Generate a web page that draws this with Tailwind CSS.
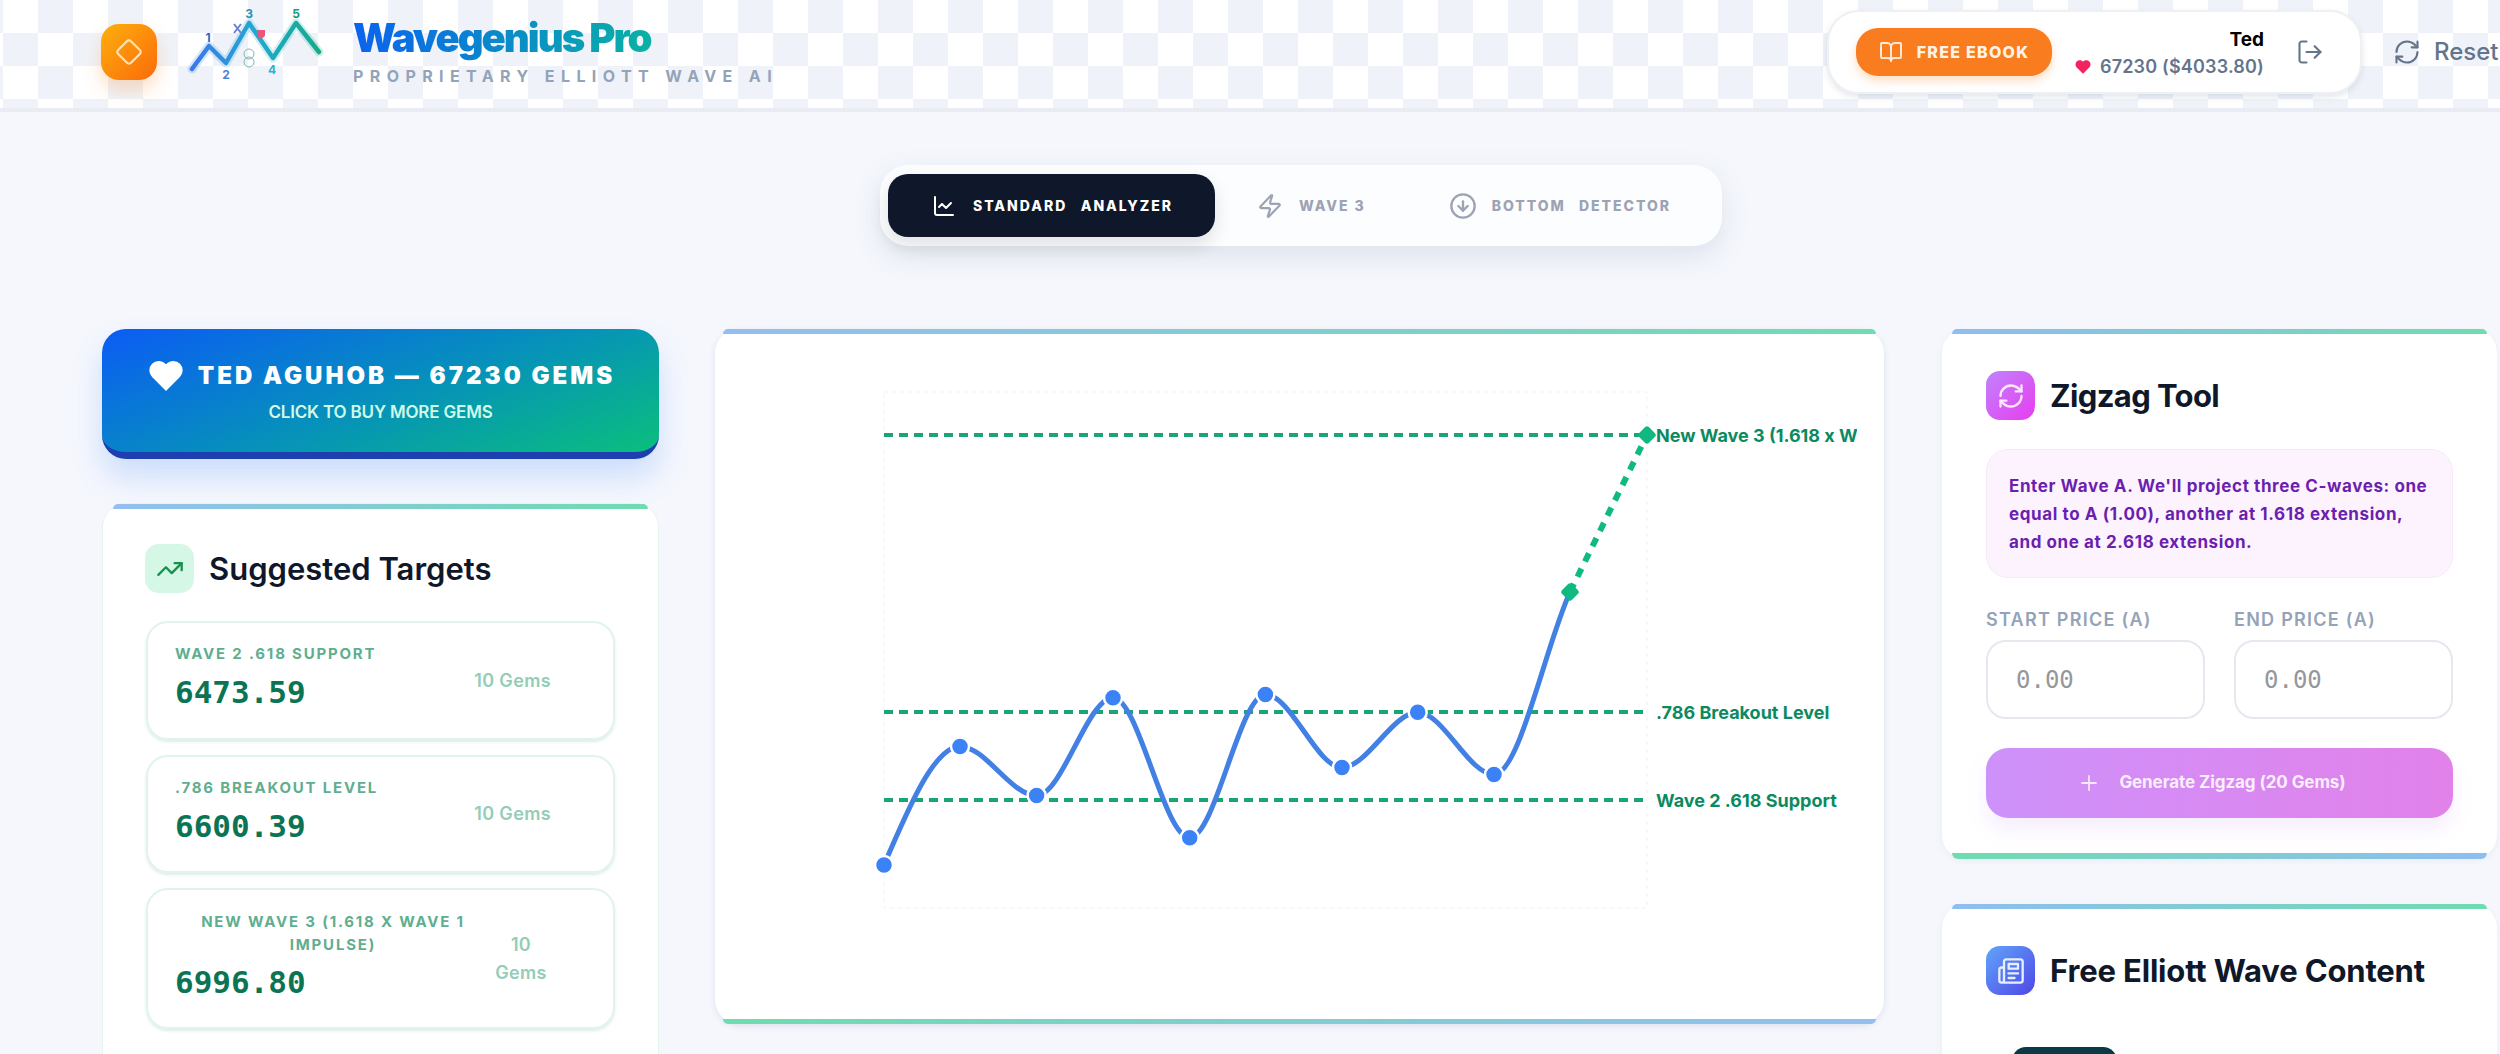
<!DOCTYPE html>
<html lang="en">
<head>
<meta charset="utf-8">
<title>Wavegenius Pro</title>
<script src="https://cdn.jsdelivr.net/npm/@tailwindcss/browser@4"></script>
</head>
<body class="font-['Inter',sans-serif]">
<div class="w-[2500px] h-[1054px] overflow-hidden bg-[#f5f7fd] flex flex-col">

  <header class="h-[112px] shrink-0 flex items-center pl-[101px] pb-[4px] border-b-4 border-[#e9edf3] bg-white bg-[conic-gradient(#eff3f9_25%,#ffffff_0_50%,#eff3f9_0_75%,#ffffff_0)] bg-[length:70px_66px] bg-[position:3px_0]">
    <div class="w-14 h-14 rounded-[18px] bg-[linear-gradient(135deg,#fdb00d,#fb6a0a)] shadow-[0_10px_18px_rgba(251,146,60,0.3)] flex items-center justify-center shrink-0">
      <svg class="w-7 h-7" viewBox="0 0 24 24" fill="none" stroke="#ffe3b8" stroke-width="1.8" stroke-linecap="round" stroke-linejoin="round"><path d="M2.7 10.3a2.41 2.41 0 0 0 0 3.41l7.59 7.59a2.41 2.41 0 0 0 3.41 0l7.59-7.59a2.41 2.41 0 0 0 0-3.41l-7.59-7.59a2.41 2.41 0 0 0-3.41 0Z"/></svg>
    </div>
    <svg class="ml-[28px] mb-[24px] shrink-0" width="140" height="80" viewBox="185 0 140 80" font-family="Inter, sans-serif" font-weight="700" font-size="12" text-anchor="middle">
      <defs>
        <linearGradient id="lg" gradientUnits="userSpaceOnUse" x1="192" y1="0" x2="319" y2="0"><stop offset="0" stop-color="#3b78e8"/><stop offset=".5" stop-color="#22a9d0"/><stop offset="1" stop-color="#14ab8a"/></linearGradient>
      </defs>
      <polyline points="192,69 209,46 226,63 249,23 273,58 296,23 319,52" fill="none" stroke="url(#lg)" stroke-width="9" stroke-linecap="round" stroke-linejoin="round" opacity=".2"/>
      <polyline points="192,69 209,46 226,63 249,23 273,58 296,23 319,52" fill="none" stroke="url(#lg)" stroke-width="4.5" stroke-linecap="round" stroke-linejoin="round"/>
      <text x="208" y="42" fill="#2f66c4">1</text>
      <text x="226" y="79" fill="#4d82d6">2</text>
      <text x="249" y="18" fill="#1f94b8">3</text>
      <text x="272" y="74" fill="#2bb3d6">4</text>
      <text x="296" y="18" fill="#149a78">5</text>
      <path d="M234 24l7 9M241 24l-7 9" stroke="#6f7fd0" stroke-width="2" fill="none"/>
      <path d="M257 30h8v6l-4 3-4-3z" fill="#e8557f"/>
      <circle cx="249" cy="54" r="5" fill="none" stroke="#7fb7b8" stroke-width="1"/>
      <circle cx="249" cy="62" r="5" fill="none" stroke="#7fb7b8" stroke-width="1"/>
    </svg>
    <div class="ml-[28px] mb-[4px] shrink-0 flex flex-col">
      <div class="text-[40px] leading-[46px] font-black tracking-[-0.05em] bg-[linear-gradient(90deg,#0b63ee,#0ab6a0_75%,#10b981)] bg-clip-text text-transparent">Wavegenius Pro</div>
      <div class="mt-[5px] text-[16px] leading-5 font-bold tracking-[0.4em] text-[#94a3b8] whitespace-nowrap">PROPRIETARY ELLIOTT WAVE AI</div>
    </div>
    <div class="ml-auto flex items-center gap-[31px] shrink-0 whitespace-nowrap">
      <div class="w-[535px] h-[84px] bg-white rounded-[32px] border-2 border-[#eef0f4] shadow-[0_3px_6px_rgba(100,116,139,0.18)] flex items-center pl-[27px]">
        <div class="w-[196px] h-[48px] rounded-[22px] bg-[#f97c1e] shadow-[0_5px_10px_rgba(251,146,60,0.3)] flex items-center justify-center gap-[14px] text-white">
          <svg class="w-[24px] h-[24px]" viewBox="0 0 24 24" fill="none" stroke="#ffe9d6" stroke-width="2" stroke-linecap="round" stroke-linejoin="round"><path d="M12 7v14"/><path d="M3 18a1 1 0 0 1-1-1V4a1 1 0 0 1 1-1h5a4 4 0 0 1 4 4 4 4 0 0 1 4-4h5a1 1 0 0 1 1 1v13a1 1 0 0 1-1 1h-6a3 3 0 0 0-3 3 3 3 0 0 0-3-3z"/></svg>
          <span class="text-[16px] font-extrabold tracking-[0.08em] text-[#fff3e6]">FREE EBOOK</span>
        </div>
        <div class="w-[212px] flex flex-col items-end">
          <div class="text-[19px] leading-[26px] font-bold text-black">Ted</div>
          <div class="flex items-center gap-[8px] mt-[3px]">
            <svg class="w-[18px] h-[18px]" viewBox="0 0 24 24" fill="#f4225e"><path d="M19 14c1.49-1.46 3-3.21 3-5.5A5.5 5.5 0 0 0 16.5 3c-1.76 0-3 .5-4.5 2-1.5-1.5-2.74-2-4.5-2A5.5 5.5 0 0 0 2 8.5c0 2.3 1.5 4.05 3 5.5l7 7Z"/></svg>
            <span class="text-[18px] leading-[22px] font-semibold tracking-[0.01em] text-[#64748b]">67230 ($4033.80)</span>
          </div>
        </div>
        <svg class="ml-[32px] w-[28px] h-[28px]" viewBox="0 0 24 24" fill="none" stroke="#64748b" stroke-width="1.8" stroke-linecap="round" stroke-linejoin="round"><path d="M9 21H5a2 2 0 0 1-2-2V5a2 2 0 0 1 2-2h4"/><polyline points="16 17 21 12 16 7"/><line x1="21" y1="12" x2="9" y2="12"/></svg>
      </div>
      <div class="flex items-center gap-[13px] text-[#64748b] w-[107px]">
        <svg class="w-[28px] h-[28px] shrink-0" viewBox="0 0 24 24" fill="none" stroke="#64748b" stroke-width="1.8" stroke-linecap="round" stroke-linejoin="round"><path d="M3 12a9 9 0 0 1 9-9 9.75 9.75 0 0 1 6.74 2.74L21 8"/><path d="M21 3v5h-5"/><path d="M21 12a9 9 0 0 1-9 9 9.75 9.75 0 0 1-6.74-2.74L3 16"/><path d="M8 16H3v5"/></svg>
        <span class="text-[24px] leading-8 font-medium">Reset</span>
      </div>
    </div>
  </header>

  <div class="flex justify-center pt-[53px] ml-[102px]">
    <nav class="w-[842px] h-[81px] bg-[#fcfdfe] rounded-[28px] shadow-[0_10px_28px_rgba(100,116,139,0.16)] flex items-center pl-[8px] text-[14px] font-extrabold tracking-[0.14em] whitespace-nowrap">
      <div class="w-[327px] h-[63px] rounded-[20px] bg-[#0f172a] text-white flex items-center pl-[44px] gap-[17px] shadow-[0_8px_18px_rgba(15,23,42,0.12)]">
        <svg class="w-[24px] h-[24px]" viewBox="0 0 24 24" fill="none" stroke="currentColor" stroke-width="2" stroke-linecap="round" stroke-linejoin="round"><path d="M3 3v16a2 2 0 0 0 2 2h16"/><path d="m19 9-5 5-4-4-3 3"/></svg>
        <span class="[word-spacing:0.6em]">STANDARD ANALYZER</span>
      </div>
      <div class="ml-[42px] flex items-center gap-[16px] text-[#9ca3b4]">
        <svg class="w-[26px] h-[26px]" viewBox="0 0 24 24" fill="none" stroke="currentColor" stroke-width="2" stroke-linecap="round" stroke-linejoin="round"><path d="M4 14a1 1 0 0 1-.78-1.63l9.9-10.2a.5.5 0 0 1 .86.46l-1.92 6.02A1 1 0 0 0 13 10h7a1 1 0 0 1 .78 1.63l-9.9 10.2a.5.5 0 0 1-.86-.46l1.92-6.02A1 1 0 0 0 11 14z"/></svg>
        <span>WAVE 3</span>
      </div>
      <div class="ml-[83px] flex items-center gap-[15px] text-[#9ca3b4]">
        <svg class="w-[28px] h-[28px]" viewBox="0 0 24 24" fill="none" stroke="currentColor" stroke-width="2" stroke-linecap="round" stroke-linejoin="round"><circle cx="12" cy="12" r="10"/><path d="M12 8v8"/><path d="m8 12 4 4 4-4"/></svg>
        <span class="[word-spacing:0.6em]">BOTTOM DETECTOR</span>
      </div>
    </nav>
  </div>

  <main class="mt-[83px] pl-[102px] grid grid-cols-[557px_1169px_557px] gap-x-[56px]">

    <section class="flex flex-col">
      <div class="h-[130px] pb-[3px] rounded-[24px] border-b-[7px] border-[#1e3fb0] bg-[linear-gradient(160deg,#0b5cf5,#0693b8_55%,#0abf7c)] shadow-[0_18px_30px_rgba(59,130,246,0.22)] flex flex-col items-center justify-center text-white">
        <div class="flex items-center gap-[12px]">
          <svg class="w-[40px] h-[40px]" viewBox="0 0 24 24" fill="#ffffff"><path d="M19 14c1.49-1.46 3-3.21 3-5.5A5.5 5.5 0 0 0 16.5 3c-1.76 0-3 .5-4.5 2-1.5-1.5-2.74-2-4.5-2A5.5 5.5 0 0 0 2 8.5c0 2.3 1.5 4.05 3 5.5l7 7Z"/></svg>
          <span class="text-[24px] leading-[30px] font-black tracking-[0.125em]">TED AGUHOB — 67230 GEMS</span>
        </div>
        <div class="mt-[6px] text-[17px] leading-5 font-semibold tracking-[-0.01em] text-[#d2fae8]">CLICK TO BUY MORE GEMS</div>
      </div>

      <div class="mt-[44px] h-[600px] bg-white rounded-[24px] border border-[#e3f5ee] flex flex-col">
        <div class="h-[5px] mx-[10px] rounded-t-[10px] bg-[linear-gradient(90deg,#93bff0,#6fdcb0)] shrink-0"></div>
        <div class="mt-[35px] ml-[42px] flex items-center gap-[15px]">
          <div class="w-[49px] h-[49px] rounded-[14px] bg-[#d5f7e6] flex items-center justify-center">
            <svg class="w-[28px] h-[28px]" viewBox="0 0 24 24" fill="none" stroke="#16924f" stroke-width="2" stroke-linecap="round" stroke-linejoin="round"><path d="M22 7 13.5 15.5 8.5 10.5 2 17"/><path d="M16 7h6v6"/></svg>
          </div>
          <h2 class="text-[31px] leading-9 font-semibold text-[#0f172a]">Suggested Targets</h2>
        </div>
        <div class="mt-[28px] mx-[43px] flex flex-col gap-[15px]">
          <div class="h-[119px] rounded-[22px] border-2 border-[#e0f3ec] shadow-[0_2px_3px_rgba(16,120,90,0.14)] flex items-center pl-[27px] pr-[62px]">
            <div class="flex-1 self-start pt-[19px]">
              <div class="text-[15px] leading-[23px] font-bold tracking-[0.12em] text-[#5fae90]">WAVE 2 .618 SUPPORT</div>
              <div class="mt-[9px] font-['DejaVu_Sans_Mono',monospace] text-[31px] leading-[36px] font-bold text-[#0b7454]">6473.59</div>
            </div>
            <div class="text-[18px] leading-7 font-semibold tracking-[0.02em] text-[#93cdb8]">10 Gems</div>
          </div>
          <div class="h-[118px] rounded-[22px] border-2 border-[#e0f3ec] shadow-[0_2px_3px_rgba(16,120,90,0.14)] flex items-center pl-[27px] pr-[62px]">
            <div class="flex-1 self-start pt-[19px]">
              <div class="text-[15px] leading-[23px] font-bold tracking-[0.12em] text-[#5fae90]">.786 BREAKOUT LEVEL</div>
              <div class="mt-[9px] font-['DejaVu_Sans_Mono',monospace] text-[31px] leading-[36px] font-bold text-[#0b7454]">6600.39</div>
            </div>
            <div class="text-[18px] leading-7 font-semibold tracking-[0.02em] text-[#93cdb8]">10 Gems</div>
          </div>
          <div class="h-[141px] rounded-[22px] border-2 border-[#e0f3ec] shadow-[0_2px_3px_rgba(16,120,90,0.14)] flex items-center pl-[27px] pr-[62px]">
            <div class="flex-1 self-start pt-[20px]">
              <div class="text-[15px] leading-[23px] font-bold tracking-[0.12em] text-[#5fae90] text-center">NEW WAVE 3 (1.618 X WAVE 1<br>IMPULSE)</div>
              <div class="mt-[8px] font-['DejaVu_Sans_Mono',monospace] text-[31px] leading-[36px] font-bold text-[#0b7454]">6996.80</div>
            </div>
            <div class="w-[60px] text-center text-[18px] leading-7 font-semibold tracking-[0.02em] text-[#93cdb8]">10 Gems</div>
          </div>
        </div>
      </div>
    </section>

    <section class="h-[695px] bg-white rounded-[24px] shadow-[0_2px_6px_rgba(100,116,139,0.16)] flex flex-col">
      <div class="h-[5px] mx-[8px] rounded-t-[10px] bg-[linear-gradient(90deg,#93bff0,#6fdcb0)] shrink-0"></div>
      <svg class="flex-1 w-[1142px]" viewBox="715 336 1142 683" width="1142" height="683" fill="none" font-family="Inter, sans-serif" font-size="18" font-weight="700">
        <rect x="884" y="393" width="763" height="516" stroke="#eef1f5" stroke-width="1" stroke-dasharray="4 4"/>
        <g stroke="#1aa574" stroke-width="4" stroke-dasharray="9 6">
          <path d="M884 436H1643"/>
          <path d="M884 713H1643"/>
          <path d="M884 801H1643"/>
        </g>
        <path d="M884,866 C909.3,806.8 934.7,747.4 960,747.4 C985.5,747.4 1011,796.6 1036.6,796.6 C1062,796.6 1087.6,698.7 1113,698.7 C1138.6,698.7 1164,838.7 1189.7,838.7 C1215,838.7 1240,695.5 1265.4,695.5 C1291,695.5 1316.5,768.5 1342,768.5 C1367,768.5 1392.5,713.3 1417.7,713.3 C1443,713.3 1468.7,775.5 1494,775.5 C1519.3,775.5 1544.7,649 1570,593" stroke="#4280e4" stroke-width="5" stroke-linecap="round"/>
        <path d="M1570,593 L1647,436" stroke="#10b981" stroke-width="6" stroke-dasharray="9 8"/>
        <g fill="#3b82f6" stroke="#ffffff" stroke-width="2.5">
          <circle cx="884" cy="866" r="9"/><circle cx="960" cy="747.4" r="9"/><circle cx="1036.6" cy="796.6" r="9"/><circle cx="1113" cy="698.7" r="9"/><circle cx="1189.7" cy="838.7" r="9"/><circle cx="1265.4" cy="695.5" r="9"/><circle cx="1342" cy="768.5" r="9"/><circle cx="1417.7" cy="713.3" r="9"/><circle cx="1494" cy="775.5" r="9"/>
        </g>
        <g fill="#10b981">
          <rect x="1563" y="586" width="14" height="14" rx="3" transform="rotate(45 1570 593)"/>
          <rect x="1640" y="429" width="14" height="14" rx="3" transform="rotate(45 1647 436)"/>
        </g>
        <g fill="#0b8a5f" dominant-baseline="central">
          <text x="1656" y="436">New Wave 3 (1.618 x Wave 1 Impulse)</text>
          <text x="1656" y="713">.786 Breakout Level</text>
          <text x="1656" y="801">Wave 2 .618 Support</text>
        </g>
      </svg>
      <div class="h-[5px] mx-[8px] rounded-b-[10px] bg-[linear-gradient(90deg,#6fdcb0,#93bff0)] shrink-0"></div>
    </section>

    <section class="flex flex-col gap-[45px] ml-[2px]">
      <div class="h-[530px] bg-white rounded-[24px] shadow-[0_2px_6px_rgba(100,116,139,0.08)] flex flex-col">
        <div class="h-[5px] mx-[10px] rounded-t-[10px] bg-[linear-gradient(90deg,#8fbdf0,#6fdcb0)] shrink-0"></div>
        <div class="mt-[37px] ml-[44px] flex items-center gap-[15px]">
          <div class="w-[49px] h-[49px] rounded-[14px] bg-[linear-gradient(135deg,#c084fc,#e83cf0)] flex items-center justify-center">
            <svg class="w-[28px] h-[28px]" viewBox="0 0 24 24" fill="none" stroke="#fbe8ff" stroke-width="2" stroke-linecap="round" stroke-linejoin="round"><path d="M3 12a9 9 0 0 1 9-9 9.75 9.75 0 0 1 6.74 2.74L21 8"/><path d="M21 3v5h-5"/><path d="M21 12a9 9 0 0 1-9 9 9.75 9.75 0 0 1-6.74-2.74L3 16"/><path d="M8 16H3v5"/></svg>
          </div>
          <h2 class="text-[31px] leading-9 font-bold tracking-[-0.02em] text-[#0f172a]">Zigzag Tool</h2>
        </div>
        <div class="mt-[29px] mx-[44px] h-[129px] rounded-[22px] bg-[#fdf3fe] border border-[#f6eaf8] pl-[22px] pt-[22px] text-[17px] leading-[28px] font-bold tracking-[0.035em] whitespace-nowrap text-[#6b1fae]">Enter Wave A. We'll project three C-waves: one<br>equal to A (1.00), another at 1.618 extension,<br>and one at 2.618 extension.</div>
        <div class="mt-[32px] mx-[44px] grid grid-cols-2 gap-x-[29px]">
          <label class="flex flex-col">
            <span class="text-[18px] leading-5 font-semibold tracking-[0.07em] text-[#94a3b8]">START PRICE (A)</span>
            <span class="mt-[10px] h-[79px] rounded-[20px] border-2 border-[#e5e9ef] pl-[28px] flex items-center font-['DejaVu_Sans_Mono',monospace] text-[24px] text-[#94979c]">0.00</span>
          </label>
          <label class="flex flex-col">
            <span class="text-[18px] leading-5 font-semibold tracking-[0.07em] text-[#94a3b8]">END PRICE (A)</span>
            <span class="mt-[10px] h-[79px] rounded-[20px] border-2 border-[#e5e9ef] pl-[28px] flex items-center font-['DejaVu_Sans_Mono',monospace] text-[24px] text-[#94979c]">0.00</span>
          </label>
        </div>
        <div class="mt-[29px] mx-[44px] h-[70px] rounded-[22px] bg-[linear-gradient(90deg,#cd92fa,#e281ea)] shadow-[0_12px_20px_rgba(192,132,252,0.14)] flex items-center justify-center gap-[18px] pr-[16px]">
          <svg class="w-[24px] h-[24px]" viewBox="0 0 24 24" fill="none" stroke="#f9e6fd" stroke-width="1.8" stroke-linecap="round"><path d="M5 12h14"/><path d="M12 5v14"/></svg>
          <span class="text-[17px] font-bold tracking-[-0.005em] text-[#fbeeff]">Generate Zigzag (20 Gems)</span>
        </div>
        <div class="mt-auto h-[6px] mx-[10px] rounded-b-[10px] bg-[linear-gradient(90deg,#6fdcb0,#8fbdf0)] shrink-0"></div>
      </div>
      <div class="h-[300px] bg-white rounded-[24px] shadow-[0_2px_6px_rgba(100,116,139,0.08)] flex flex-col">
        <div class="h-[5px] mx-[10px] rounded-t-[10px] bg-[linear-gradient(90deg,#8fbdf0,#6fdcb0)] shrink-0"></div>
        <div class="mt-[37px] ml-[44px] flex items-center gap-[15px]">
          <div class="w-[49px] h-[49px] rounded-[14px] bg-[linear-gradient(135deg,#60a5fa,#4f46e5)] flex items-center justify-center">
            <svg class="w-[28px] h-[28px]" viewBox="0 0 24 24" fill="none" stroke="#e6efff" stroke-width="2" stroke-linecap="round" stroke-linejoin="round"><path d="M4 22h16a2 2 0 0 0 2-2V4a2 2 0 0 0-2-2H8a2 2 0 0 0-2 2v16a2 2 0 0 1-2 2Zm0 0a2 2 0 0 1-2-2v-9c0-1.1.9-2 2-2h2"/><path d="M18 14h-8"/><path d="M15 18h-5"/><path d="M10 6h8v4h-8V6Z"/></svg>
          </div>
          <h2 class="text-[31px] leading-9 font-bold tracking-[-0.005em] text-[#0f172a]">Free Elliott Wave Content</h2>
        </div>
        <div class="mt-[52px] ml-[70px] w-[105px] h-[40px] rounded-t-[14px] bg-[#0b3a46]"></div>
      </div>
    </section>
  </main>
</div>
</body>
</html>
